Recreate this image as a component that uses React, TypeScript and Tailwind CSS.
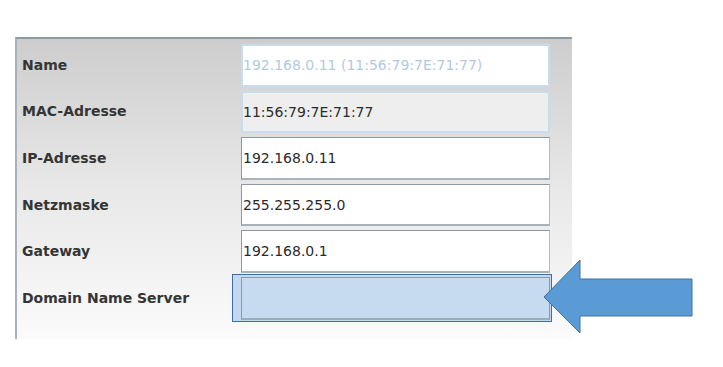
import React from 'react'

const rows = [
  { label: 'Name', value: '', placeholder: '192.168.0.11 (11:56:79:7E:71:77)', kind: 'name' },
  { label: 'MAC-Adresse', value: '11:56:79:7E:71:77', kind: 'readonly' },
  { label: 'IP-Adresse', value: '192.168.0.11', kind: 'edit' },
  { label: 'Netzmaske', value: '255.255.255.0', kind: 'edit' },
  { label: 'Gateway', value: '192.168.0.1', kind: 'edit' },
  { label: 'Domain Name Server', value: '', kind: 'focus' },
]

function Field({ row }: { row: (typeof rows)[number] }) {
  const base =
    'w-full h-full text-[14px] text-[#2b2b2b] outline-none font-["DejaVu_Sans",sans-serif]'

  if (row.kind === 'name') {
    return (
      <input
        className={`${base} px-0 bg-white border-2 border-[#c9dbee] placeholder:text-[#b3c9e2]`}
        placeholder={row.placeholder}
        defaultValue=""
      />
    )
  }
  if (row.kind === 'readonly') {
    return (
      <input
        className={`${base} px-0 bg-[#eeeeee] border-2 border-[#c9dbee]`}
        defaultValue={row.value}
        readOnly
      />
    )
  }
  if (row.kind === 'focus') {
    return (
      <div className="relative w-full h-full">
        <div className="absolute -left-[9px] -right-[2px] -top-[3px] -bottom-[2px] border border-[#3c6fa6] bg-[#c3d9ef]" />
        <input
          className={`${base} px-[1px] relative bg-[#c6dbf0] border border-[#8c9aa8] border-b-2 border-b-[#9eabb8]`}
          defaultValue=""
        />
      </div>
    )
  }
  return (
    <input
      className={`${base} px-[1px] bg-white border border-[#8f979f] border-b-2 border-b-[#a9b1b9] border-r-[#b4bcc4]`}
      defaultValue={row.value}
    />
  )
}

export default function App() {
  return (
    <div className="relative w-[723px] h-[367px] bg-white pt-[37px] pl-[15px]">
      <div className="w-[557px] h-[302px] border-l-2 border-l-[#a8b2bc] border-t-2 border-t-[#8d99a4] bg-gradient-to-b from-[#cdcdcd] via-[#e8e8e8] to-[#fbfbfb] pt-[5px] pr-[22px] flex flex-col gap-[4px]">
        {rows.map((row) => (
          <div key={row.label} className="flex items-center h-[42.6px]">
            <div className="w-[224px] pl-[5px] text-[14px] font-bold text-[#353535] font-['DejaVu_Sans',sans-serif]">
              {row.label}
            </div>
            <div className="flex-1 h-full">
              <Field row={row} />
            </div>
          </div>
        ))}
      </div>

      <svg
        className="absolute left-[543px] top-[257px]"
        width="151"
        height="80"
        viewBox="0 0 151 80"
      >
        <polygon
          points="1,40 37,3 37,22 149,22 149,59 37,59 37,76"
          fill="#5b9bd5"
          stroke="#41719c"
          strokeWidth="1"
        />
      </svg>
    </div>
  )
}
